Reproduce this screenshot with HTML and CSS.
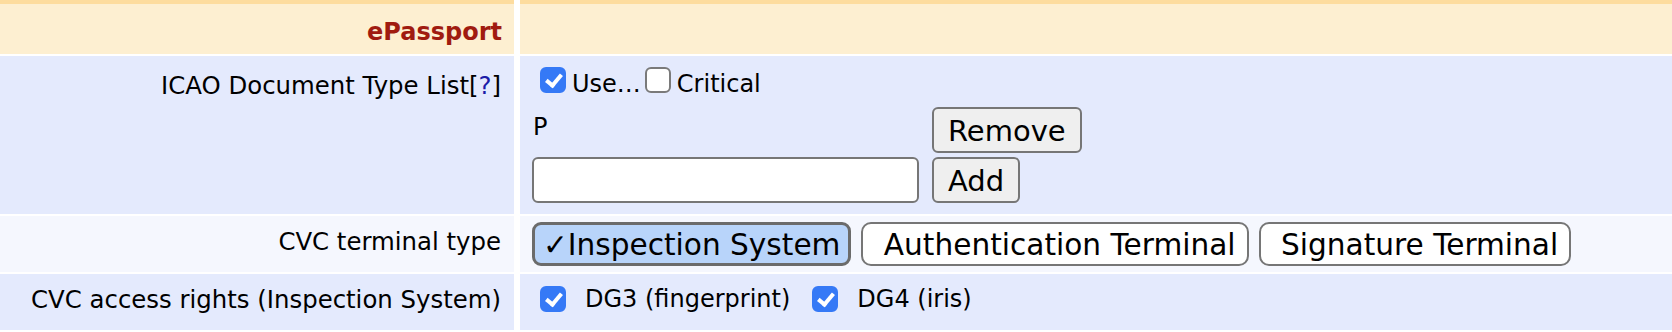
FILE: index.html
```html
<!DOCTYPE html>
<html lang="en">
<head>
    <meta charset="UTF-8">
    <title>ePassport settings</title>
    <link rel="stylesheet" href="styles.css">
</head>
<body>
    <div class="form">
        <div class="cell head-label">ePassport</div>
        <div class="cell head-value"></div>

        <div class="cell label row-list">ICAO Document Type List[<a href="#" class="help">?</a>]</div>
        <div class="cell value row-list">
            <div class="flags">
                <label class="flag"><input type="checkbox" class="check" checked>Use…</label>
                <label class="flag flag-critical"><input type="checkbox" class="check">Critical</label>
            </div>
            <div class="list-editor">
                <div class="list-item">P</div>
                <button class="btn">Remove</button>
                <input type="text" class="text-input">
                <button class="btn">Add</button>
            </div>
        </div>

        <div class="cell label row-alt row-terminal">CVC terminal type</div>
        <div class="cell value row-alt row-terminal">
            <div class="toggles">
                <button class="toggle is-on">✓Inspection System</button>
                <button class="toggle">&nbsp;Authentication Terminal</button>
                <button class="toggle">&nbsp;Signature Terminal</button>
            </div>
        </div>

        <div class="cell label row-rights">CVC access rights (Inspection System)</div>
        <div class="cell value row-rights">
            <div class="rights">
                <label class="right"><input type="checkbox" class="check" checked>DG3 (fingerprint)</label>
                <label class="right"><input type="checkbox" class="check" checked>DG4 (iris)</label>
            </div>
        </div>
    </div>
</body>
</html>
```

FILE: styles.css
```css
* {
    box-sizing: border-box;
}

body {
    margin: 0;
    background: #fff;
    font-family: "DejaVu Sans", Verdana, sans-serif;
    font-size: 24px;
    line-height: 28px;
    color: #000;
}

.form {
    display: grid;
    grid-template-columns: 514px 1fr;
    gap: 2px 6px;
}

.cell {
    background: #e4eafd;
}

.label {
    text-align: right;
    padding-right: 13px;
    font-size: 24.4px;
}

.value {
    padding-left: 12px;
}

/* header row */
.head-label,
.head-value {
    height: 54px;
    background: #fdefd1;
    border-top: 4px solid #fddc9e;
}

.head-label {
    text-align: right;
    padding: 14px 12px 0 0;
    font-weight: bold;
    color: #a01b10;
}

.help {
    color: #1c1ca8;
    text-decoration: none;
}

/* document type list */
.row-list {
    min-height: 158px;
}

.label.row-list {
    padding-top: 16px;
}

.value.row-list {
    padding-top: 11px;
    padding-bottom: 11px;
}

.flags {
    display: flex;
    align-items: center;
    height: 34px;
}

.flag {
    display: flex;
    align-items: center;
}

.flag-critical .check {
    margin-left: 4px;
}

.check {
    appearance: none;
    -webkit-appearance: none;
    position: relative;
    flex: none;
    width: 26px;
    height: 26px;
    margin: 0 6px 8px 8px;
    border: 2px solid #7a7a7a;
    border-radius: 6px;
    background: #fff;
}

.check:checked {
    background: #3579f6;
    border-color: #3579f6;
}

.check:checked::after {
    content: "";
    position: absolute;
    left: 7px;
    top: 2px;
    width: 6px;
    height: 12px;
    border: solid #fff;
    border-width: 0 4px 4px 0;
    transform: rotate(40deg);
}

.list-editor {
    display: grid;
    grid-template-columns: 387px auto;
    grid-auto-rows: 46px;
    gap: 4px 13px;
    margin-top: 6px;
    justify-content: start;
}

.list-item {
    padding-top: 6px;
    padding-left: 1px;
}

.text-input {
    width: 387px;
    height: 46px;
    border: 2px solid #767676;
    border-radius: 6px;
    background: #fff;
    font: inherit;
    padding: 0 8px;
}

.btn {
    justify-self: start;
    height: 46px;
    padding: 2px 14px 0;
    border: 2px solid #767676;
    border-radius: 6px;
    background: #efefef;
    font-family: inherit;
    font-size: 29px;
    line-height: 1;
    color: #000;
}

/* terminal type */
.row-alt {
    background: #f5f7fe;
}

.row-terminal {
    height: 56px;
}

.label.row-terminal {
    padding-top: 12px;
}

.value.row-terminal {
    padding-top: 6px;
}

.toggles {
    display: flex;
    gap: 10px;
}

.toggle {
    height: 44px;
    padding: 4px 11px 0;
    border: 2px solid #767676;
    border-radius: 10px;
    background: #fff;
    font-family: inherit;
    font-size: 29.6px;
    line-height: 1;
    color: #000;
    white-space: nowrap;
}

.toggle.is-on {
    padding: 4px 8px 0;
    border: 3px solid #6b6b6b;
    border-radius: 9px;
    background: #b8d4fa;
}

/* access rights */
.row-rights {
    height: 56px;
    padding-top: 12px;
}

.rights {
    display: flex;
    align-items: center;
    height: 26px;
}

.right {
    display: flex;
    align-items: center;
    margin-right: 14px;
}

.right .check {
    margin: 0 19px 0 8px;
}
```
